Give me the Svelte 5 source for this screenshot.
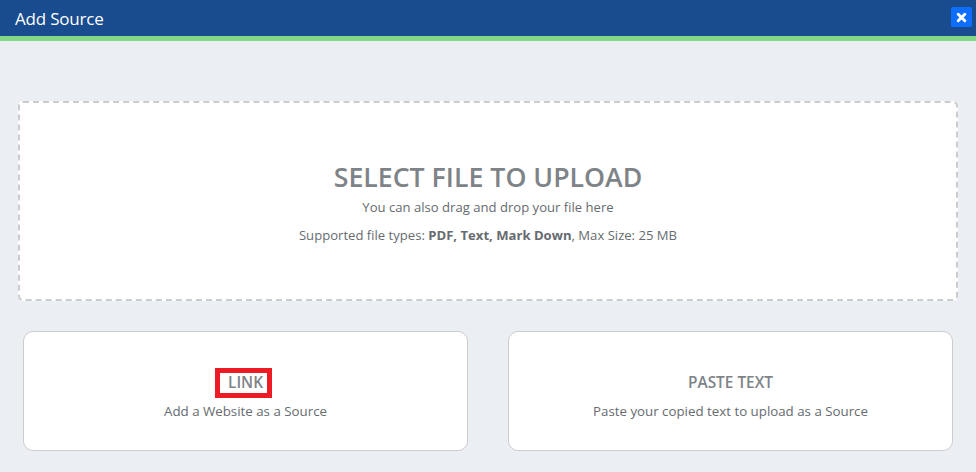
<script lang="ts">
  const cards = [
    { title: 'LINK', text: 'Add a Website as a Source', marked: true },
    { title: 'PASTE TEXT', text: 'Paste your copied text to upload as a Source', marked: false },
  ];
</script>

<div class="modal">
  <header class="modal-header">
    <h1>Add Source</h1>
    <button class="close" aria-label="Close">
      <svg viewBox="0 0 12 12" width="11" height="11"><path d="M2.4 2.4 9.6 9.6M9.6 2.4 2.4 9.6" stroke="#fff" stroke-width="3.2" stroke-linecap="round" fill="none" /></svg>
    </button>
  </header>

  <main class="modal-body">
    <div class="dropzone">
      <h2>SELECT FILE TO UPLOAD</h2>
      <p class="hint">You can also drag and drop your file here</p>
      <p class="types">Supported file types: <b>PDF, Text, Mark Down</b>, Max Size: 25 MB</p>
    </div>

    <div class="cards">
      {#each cards as card}
        <div class="card">
          <h3 class:marked={card.marked}>{card.title}</h3>
          <p>{card.text}</p>
        </div>
      {/each}
    </div>
  </main>
</div>

<style>
  :global(body) {
    background: #ebeef3;
  }

  .modal {
    font-family: "Open Sans", "Noto Sans", sans-serif;
    color: #6c757d;
    height: 472px;
    overflow: hidden;
  }

  .modal-header {
    display: flex;
    align-items: center;
    justify-content: space-between;
    height: 36px;
    padding: 0 4px 0 15px;
    background: #194b8f;
    border-bottom: 5px solid #82d985;
  }

  h1 {
    margin: 0;
    font-size: 17px;
    font-weight: 400;
    color: #fff;
    letter-spacing: -0.2px;
  }

  .close {
    display: flex;
    align-items: center;
    justify-content: center;
    width: 21px;
    height: 20px;
    padding: 0;
    margin-top: -2px;
    border: 0;
    border-radius: 2px;
    background: #0d6efd;
  }

  .modal-body {
    padding: 60px 18px 0;
  }

  .dropzone {
    height: 200px;
    box-sizing: border-box;
    display: flex;
    flex-direction: column;
    align-items: center;
    background: #fff;
    border: 2px dashed #ccc;
    border-radius: 5px;
    padding-top: 57px;
  }

  h2 {
    margin: 0;
    font-size: 26.7px;
    line-height: 34px;
    font-weight: 600;
    color: #7e8387;
  }

  .dropzone p {
    margin: 0;
    font-size: 13.1px;
    line-height: 20px;
    color: #666b70;
  }

  .dropzone .hint {
    margin-top: 3px;
  }

  .dropzone .types {
    margin-top: 8px;
  }

  .cards {
    display: flex;
    gap: 40px;
    margin: 30px 5px 0;
  }

  .card {
    flex: 1;
    height: 120px;
    box-sizing: border-box;
    display: flex;
    flex-direction: column;
    align-items: center;
    background: #fff;
    border: 1px solid #ccc;
    border-radius: 10px;
    padding-top: 41px;
  }

  h3 {
    margin: 0;
    font-size: 15.4px;
    line-height: 20px;
    font-weight: 600;
    color: #7e8387;
  }

  h3.marked {
    padding: 0 4px 0 8px;
    margin-right: 4px;
    outline: 5px solid #ed1c24;
  }

  .card p {
    margin: 8px 0 0;
    font-size: 13.3px;
    line-height: 20px;
    color: #666b70;
  }
</style>
